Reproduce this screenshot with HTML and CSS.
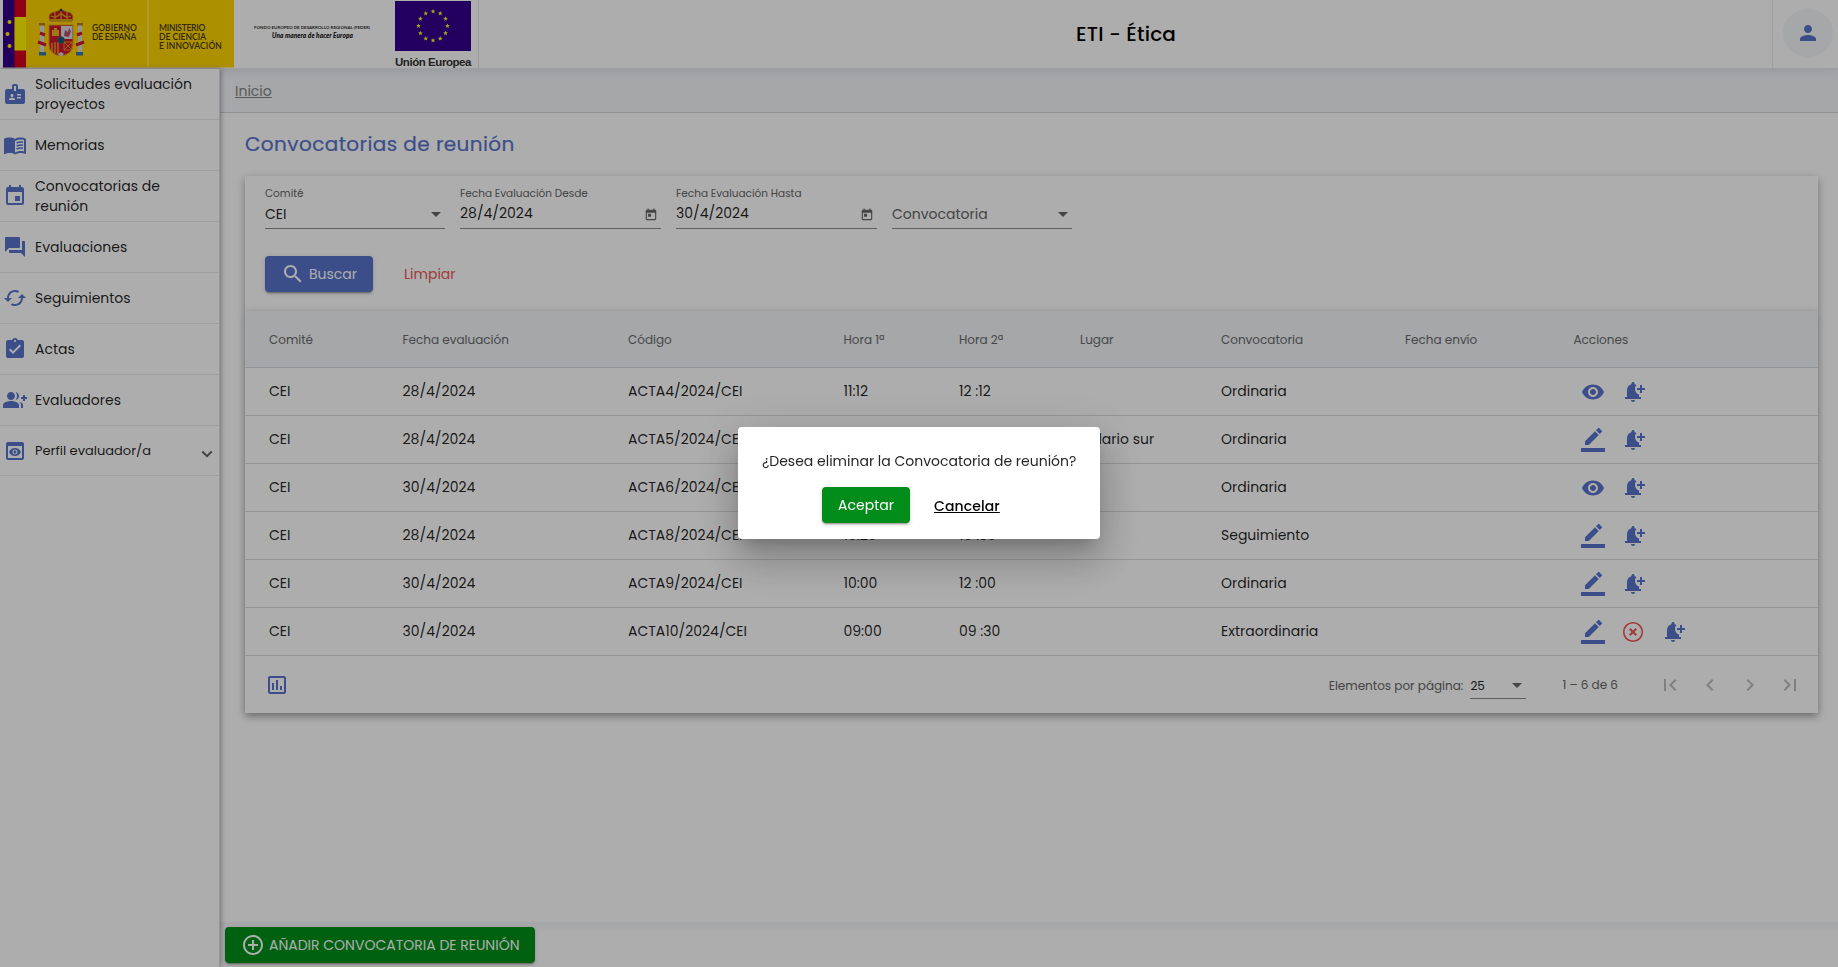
FILE: index.html
```html
<!DOCTYPE html>
<html lang="es">
<head>
<meta charset="utf-8">
<title>ETI - Ética</title>
<link rel="stylesheet" href="styles.css">
</head>
<body>
<svg class="defs" aria-hidden="true">
  <symbol id="i-eye" viewBox="0 0 24 24"><path d="M12 4.500C7 4.500 2.730 7.610 1 12c1.730 4.390 6 7.500 11 7.500s9.270-3.110 11-7.500c-1.730-4.390-6-7.500-11-7.500zM12 17c-2.760 0-5-2.240-5-5s2.240-5 5-5 5 2.240 5 5-2.240 5-5 5zm0-8c-1.660 0-3 1.340-3 3s1.340 3 3 3 3-1.340 3-3-1.340-3-3-3z"/></symbol>
  <symbol id="i-edit" viewBox="0 0 24 24"><path d="M17.750 7L14 3.250l-10 10V17h3.750l10-10zm2.960-2.960c.39-.39.39-1.020 0-1.410L18.370.290c-.39-.39-1.020-.39-1.410 0L15 2.250 18.750 6l1.960-1.960zM0 20h24v4H0z"/></symbol>
  <symbol id="i-bell" viewBox="0 0 24 24"><path d="M10 20h4c0 1.100-.9 2-2 2s-2-.9-2-2zm4-11c0 2.610 1.670 4.830 4 5.660V17h2v2H4v-2h2v-7c0-2.790 1.910-5.140 4.500-5.800v-.7c0-.83.67-1.500 1.500-1.500s1.500.67 1.500 1.500v.7c.71.18 1.360.49 1.950.9C14.540 6.140 14 7.500 14 9zm10-1h-3V5h-2v3h-3v2h3v3h2v-3h3V8z"/></symbol>
  <symbol id="i-cancel" viewBox="0 0 24 24"><circle cx="12" cy="12" r="9.300" fill="none" stroke="currentColor" stroke-width="1.600"/><path d="M8.700 8.700l6.600 6.600M15.300 8.700l-6.600 6.600" fill="none" stroke="currentColor" stroke-width="2"/></symbol>
  <symbol id="i-cal" viewBox="0 0 24 24"><path d="M19 3h-1V1h-2v2H8V1H6v2H5c-1.110 0-1.990.9-1.990 2L3 19c0 1.100.89 2 2 2h14c1.100 0 2-.9 2-2V5c0-1.100-.9-2-2-2zm0 16H5V8h14v11zM7 10h5v5H7z"/></symbol>
</svg>
<div class="page">
  <header class="topbar">
    <svg class="gov" viewBox="0 0 234 68" width="234" height="68">
      <rect x="3" width="12" height="67.500" fill="#35008a"/><rect x="14.500" width="12" height="67.500" fill="#d4001c"/><rect x="14.500" y="17" width="12" height="33.500" fill="#fff500"/>
      <rect x="26" width="121" height="67.500" fill="#ffd500"/><rect x="149" width="85" height="67.500" fill="#ffd500"/><rect x="147" width="2" height="67.500" fill="#ffe34d"/>
      <g fill="#fff200"><circle cx="9.500" cy="22" r="2"/><circle cx="7.500" cy="34" r="2"/><circle cx="9.500" cy="46" r="2"/></g>
      <g>
        <path d="M50 21q-3-8 5-9l6-2 6 2q8 1 5 9z" fill="#cb142c" stroke="#a98514" stroke-width="1"/>
        <path d="M51 16q5 3 10-3q5 6 10 3M61 9v12M55 12v8M67 12v8" fill="none" stroke="#d9a91a" stroke-width="1.200"/><rect x="50" y="19" width="22" height="3" fill="#d4a419"/><circle cx="61" cy="10" r="1.500" fill="#4a3a20"/>
        <path d="M40 25h4v27h-4zM78 25h4v27h-4z" fill="#d9dce2"/><path d="M39 23h6v2.500h-6zM77 23h6v2.500h-6z" fill="#b67a18"/>
        <path d="M39 52h7v3.500h-7zM76 52h7v3.500h-7z" fill="#3977a8"/><path d="M38 42l8 3M84 42l-8 3M40 33l5 2M82 33l-5 2" stroke="#cf1530" stroke-width="3"/>
        <path d="M49 25h24v20q0 9-12 11q-12-2-12-11z" fill="#d31532" stroke="#d9a41c"/>
        <path d="M61 26h11.500v13H61z" fill="#dfdbe4"/><path d="M64 36l1-6 3 2 1-4 2 3-2 6z" fill="#b34e79"/><path d="M52 36v-6h2v-2h3v2h2v6z" fill="#e7b61c"/><path d="M52 43v9M55 42v11M58 42v12" stroke="#f2ba16" stroke-width="1.200"/><path d="M64 42h8v8h-8zM64 42l8 8M72 42l-8 8" fill="none" stroke="#edb216" stroke-width=".8"/>
        <circle cx="61" cy="40" r="3.300" fill="#174f8f" stroke="#3f6b47"/><path d="M58 54l3-2 3 2-3 3z" fill="#d8d7cc"/>
      </g>
    </svg>
    <div class="gov-text gov-a"><span class="fit" data-w="45">GOBIERNO</span><span class="fit" data-w="44">DE ESPAÑA</span></div>
    <div class="gov-text gov-b"><span class="fit" data-w="46">MINISTERIO</span><span class="fit" data-w="47">DE CIENCIA</span><span class="fit" data-w="63">E INNOVACIÓN</span></div>
    <div class="feder"><span class="fit small" data-w="116">FONDO EUROPEO DE DESARROLLO REGIONAL (FEDER)</span><span class="fit tag" data-w="81">Una manera de hacer Europa</span></div>
    <div class="eu"><svg width="76" height="51" viewBox="0 0 76 51"><rect y="1" width="76" height="50.500" fill="#34008c"/><g id="stars" fill="#f5ef2a"></g></svg><span class="fit" data-w="76">Unión Europea</span></div>
    <div class="apptitle">ETI - Ética</div>
    <div class="user"><span class="avatar"><svg viewBox="0 0 24 24" width="24" height="24"><path d="M12 12c2.210 0 4-1.790 4-4s-1.790-4-4-4-4 1.790-4 4 1.790 4 4 4zm0 2c-2.670 0-8 1.340-8 4v2h16v-2c0-2.660-5.330-4-8-4z"/></svg></span></div>
  </header>
  <div class="body">
    <nav class="side">
      <a class="nav"><svg viewBox="0 0 24 24"><path d="M20 7h-5V4c0-1.100-.9-2-2-2h-2c-1.100 0-2 .9-2 2v3H4c-1.100 0-2 .9-2 2v11c0 1.100.9 2 2 2h16c1.100 0 2-.9 2-2V9c0-1.100-.9-2-2-2zM9 12c.83 0 1.500.67 1.500 1.500S9.830 15 9 15s-1.500-.67-1.500-1.500S8.170 12 9 12zm3 6H6v-.75c0-1 2-1.500 3-1.500s3 .5 3 1.500V18zm1-9h-2V4h2v5zm5 7.500h-4V15h4v1.500zm0-3h-4V12h4v1.500z"/></svg><span>Solicitudes evaluación<br>proyectos</span></a>
      <a class="nav"><svg viewBox="0 0 24 24"><path d="M21 5c-1.110-.35-2.330-.5-3.500-.5-1.950 0-4.050.4-5.500 1.500-1.450-1.100-3.550-1.500-5.500-1.500S2.450 4.900 1 6v14.650c0 .25.25.5.5.5.1 0 .15-.05.25-.05C3.100 20.450 5.050 20 6.500 20c1.950 0 4.050.4 5.500 1.500 1.350-.85 3.800-1.500 5.500-1.500 1.650 0 3.350.3 4.750 1.050.1.050.15.050.25.050.25 0 .5-.25.5-.5V6c-.6-.45-1.250-.75-2-1zm0 13.500c-1.100-.35-2.300-.5-3.500-.5-1.700 0-4.150.65-5.500 1.500V8c1.350-.85 3.800-1.500 5.500-1.500 1.200 0 2.400.15 3.500.5v11.500z"/><path d="M13.600 10q3-1.500 6.400-.8M13.600 13q3-1.500 6.400-.8M13.600 16q3-1.500 6.400-.8" fill="none" stroke="currentColor" stroke-width="1.500"/></svg><span>Memorias</span></a>
      <a class="nav"><svg viewBox="0 0 24 24"><path d="M17 12h-5v5h5v-5zM16 1v2H8V1H6v2H5c-1.110 0-1.990.9-1.990 2L3 19c0 1.100.89 2 2 2h14c1.100 0 2-.9 2-2V5c0-1.100-.9-2-2-2h-1V1h-2zm3 18H5V8h14v11z"/></svg><span>Convocatorias de<br>reunión</span></a>
      <a class="nav"><svg viewBox="0 0 24 24"><path d="M21 6h-2v9H6v2c0 .55.45 1 1 1h11l4 4V7c0-.55-.45-1-1-1zm-4 6V3c0-.55-.45-1-1-1H3c-.55 0-1 .45-1 1v14l4-4h10c.55 0 1-.45 1-1z"/></svg><span>Evaluaciones</span></a>
      <a class="nav"><svg viewBox="0 0 24 24"><path d="M19 8l-4 4h3c0 3.310-2.690 6-6 6-1.010 0-1.970-.25-2.800-.7l-1.460 1.460C8.970 19.540 10.430 20 12 20c4.420 0 8-3.580 8-8h3l-4-4zM6 12c0-3.310 2.690-6 6-6 1.010 0 1.970.25 2.800.7l1.460-1.460C15.030 4.460 13.570 4 12 4c-4.420 0-8 3.580-8 8H1l4 4 4-4H6z"/></svg><span>Seguimientos</span></a>
      <a class="nav"><svg viewBox="0 0 24 24"><path d="M19 3h-4.180C14.400 1.840 13.300 1 12 1c-1.300 0-2.400.84-2.820 2H5c-1.100 0-2 .9-2 2v14c0 1.100.9 2 2 2h14c1.100 0 2-.9 2-2V5c0-1.100-.9-2-2-2zm-7 0c.55 0 1 .45 1 1s-.45 1-1 1-1-.45-1-1 .45-1 1-1zm-2 14l-4-4 1.410-1.410L10 14.170l6.590-6.590L18 9l-8 8z"/></svg><span>Actas</span></a>
      <a class="nav"><svg viewBox="0 0 24 24"><path d="M22 9V7h-2v2h-2v2h2v2h2v-2h2V9zM8 12c2.210 0 4-1.790 4-4s-1.790-4-4-4-4 1.790-4 4 1.790 4 4 4zm0 1c-2.670 0-8 1.340-8 4v3h16v-3c0-2.660-5.330-4-8-4zm4.510-8.950C13.430 5.110 14 6.490 14 8s-.57 2.890-1.490 3.950C14.470 11.700 16 10.040 16 8s-1.530-3.700-3.490-3.950zm4.020 9.780C17.420 14.660 18 15.700 18 17v3h2v-3c0-1.450-1.590-2.510-3.470-3.170z"/></svg><span>Evaluadores</span></a>
      <a class="nav last"><svg viewBox="0 0 24 24"><path d="M19 3H5c-1.110 0-2 .9-2 2v14c0 1.100.89 2 2 2h14c1.100 0 2-.9 2-2V5c0-1.100-.89-2-2-2zm0 16H5V7h14v12zm-5.500-6c0 .83-.67 1.500-1.500 1.500s-1.500-.67-1.500-1.500.67-1.500 1.500-1.500 1.500.67 1.500 1.500zM12 9c-2.730 0-5.060 1.660-6 4 .94 2.340 3.270 4 6 4s5.060-1.660 6-4c-.94-2.340-3.270-4-6-4zm0 6.500c-1.380 0-2.500-1.120-2.500-2.500s1.120-2.500 2.500-2.500 2.500 1.120 2.500 2.500-1.120 2.500-2.500 2.500z"/></svg><span class="grow">Perfil evaluador/a</span><svg class="chev" viewBox="0 0 12 12"><path d="M1.300 3.500L6 8.200l4.700-4.700" fill="none" stroke="currentColor" stroke-width="2"/></svg></a>
    </nav>
    <main class="main">
      <div class="crumb"><a>Inicio</a></div>
      <div class="content">
        <h1>Convocatorias de reunión</h1>
        <section class="filters">
          <div class="fields">
            <div class="field"><label>Comité</label><div class="val sel"><span>CEI</span><i class="caret"></i></div></div>
            <div class="field date"><label>Fecha Evaluación Desde</label><div class="val"><span>28/4/2024</span><svg><use href="#i-cal"/></svg></div></div>
            <div class="field date"><label>Fecha Evaluación Hasta</label><div class="val"><span>30/4/2024</span><svg><use href="#i-cal"/></svg></div></div>
            <div class="field"><label></label><div class="val sel ph"><span>Convocatoria</span><i class="caret"></i></div></div>
          </div>
          <div class="buttons">
            <button class="btn search"><svg viewBox="0 0 24 24"><path d="M15.500 14h-.79l-.28-.27C15.410 12.590 16 11.110 16 9.500 16 5.910 13.090 3 9.500 3S3 5.910 3 9.500 5.910 16 9.500 16c1.610 0 3.090-.59 4.230-1.570l.27.28v.79l5 4.990L20.490 19l-4.990-5zm-6 0C7.010 14 5 11.990 5 9.500S7.010 5 9.500 5 14 7.010 14 9.500 11.990 14 9.500 14z"/></svg><span>Buscar</span></button>
            <a class="clear">Limpiar</a>
          </div>
        </section>
        <section class="results">
          <div class="row head"><span>Comité</span><span>Fecha evaluación</span><span>Código</span><span>Hora 1ª</span><span>Hora 2ª</span><span>Lugar</span><span>Convocatoria</span><span>Fecha envío</span><span>Acciones</span></div>
          <div id="rows"></div>
          <div class="foot">
            <svg class="chart" viewBox="0 0 24 24"><path d="M9 17H7v-7h2v7zm4 0h-2V7h2v10zm4 0h-2v-4h2v4zm2 2H5V5h14v14zm0-16H5c-1.100 0-2 .9-2 2v14c0 1.100.9 2 2 2h14c1.100 0 2-.9 2-2V5c0-1.100-.9-2-2-2z"/></svg>
            <span class="per">Elementos por página:</span>
            <span class="size"><span>25</span><i class="caret"></i></span>
            <span class="range">1 – 6 de 6</span>
            <span class="pager">
              <svg viewBox="0 0 24 24"><path d="M18.410 16.590L13.820 12l4.590-4.590L17 6l-6 6 6 6zM6 6h2v12H6z"/></svg>
              <svg viewBox="0 0 24 24"><path d="M15.410 7.410L14 6l-6 6 6 6 1.410-1.410L10.830 12z"/></svg>
              <svg viewBox="0 0 24 24"><path d="M10 6L8.590 7.410 13.170 12l-4.580 4.590L10 18l6-6z"/></svg>
              <svg viewBox="0 0 24 24"><path d="M5.590 7.410L10.180 12l-4.590 4.590L7 18l6-6-6-6zM16 6h2v12h-2z"/></svg>
            </span>
          </div>
        </section>
      </div>
      <footer class="bottom"><button class="btn add"><svg viewBox="0 0 24 24"><path d="M13 7h-2v4H7v2h4v4h2v-4h4v-2h-4V7zm-1-5C6.480 2 2 6.480 2 12s4.480 10 10 10 10-4.480 10-10S17.520 2 12 2zm0 18c-4.410 0-8-3.590-8-8s3.590-8 8-8 8 3.590 8 8-3.590 8-8 8z"/></svg><span>AÑADIR CONVOCATORIA DE REUNIÓN</span></button></footer>
    </main>
  </div>
</div>
<div class="backdrop">
  <div class="dialog">
    <p>¿Desea eliminar la Convocatoria de reunión?</p>
    <div class="actions"><button class="btn ok">Aceptar</button><a class="cancel">Cancelar</a></div>
  </div>
</div>
<script src="app.js"></script>
</body>
</html>
```
FILE: styles.css
```css
* { box-sizing: border-box; }
body { margin: 0; font-family: Poppins, Inter, "Open Sans", sans-serif; font-size: 14px; color: rgba(0,0,0,.87); background: #fff; overflow: hidden; white-space: nowrap; }
.defs { position: absolute; width: 0; height: 0; }
svg { fill: currentColor; flex: none; display: block; }
.page { height: 967px; display: flex; flex-direction: column; }
.topbar { height: 69px; flex: none; display: flex; border-bottom: 1px solid #e7e8f0; box-shadow: 0 2px 10px rgba(40,40,90,.1); z-index: 1; background: #fff; }
.gov { margin-right: -142px; }
.gov-text { display: flex; flex-direction: column; align-items: flex-start; font: 600 8.500px/9px Lato, sans-serif; color: #4a3a10; padding-top: 24px; width: 67px; }
.gov-b { width: 81px; }
.feder { width: 155px; display: flex; flex-direction: column; align-items: flex-start; padding: 24px 0 0 14px; line-height: 7px; font-family: Lato, sans-serif; color: #333; }
.small { font-size: 4.500px; font-weight: 700; line-height: 8px; }
.tag { font-size: 6.500px; font-weight: 900; font-style: italic; margin-left: 18px; color: #111; }
.eu { width: 84px; font: 700 11.500px/22px "Liberation Sans", sans-serif; color: #333; border-right: 1px solid #e4e4ea; }
.eu .fit { display: block; width: max-content; }
.apptitle { flex: 1; font-size: 20px; font-weight: 500; letter-spacing: .2px; color: #000; line-height: 68px; padding-left: 597px; }
.user { width: 66px; border-left: 1px solid #e6e8ee; padding: 9px 0 0 10px; }
.avatar { width: 50px; height: 48px; border-radius: 50%; background: #f3f6f9; display: flex; align-items: center; justify-content: center; color: #5774ca; }
.body { flex: 1; display: flex; min-height: 0; }
.side { width: 220px; flex: none; border-right: 1px solid #dedede; box-shadow: 1px 0 5px rgba(0,0,0,.35); z-index: 1; background: #fff; }
.nav { display: flex; align-items: center; height: 51px; border-bottom: 1px solid #e9e9e9; padding-left: 3px; line-height: 20px; }
.nav > svg { width: 24px; height: 24px; margin-right: 8px; color: #5774ca; }
.nav.last { height: 50px; font-size: 13px; }
.grow { flex: 1; }
.nav.last .chev { width: 12px; height: 12px; color: #666; margin: 6px 6px 0 0; }
.main { flex: 1; display: flex; flex-direction: column; min-width: 0; }
.crumb { height: 44px; flex: none; background: #f3f6fa; border-bottom: 1px solid #d5d6da; padding-left: 15px; line-height: 44px; color: #858585; }
.crumb a { text-decoration: underline; }
.content { flex: 1; padding: 13px 20px 0 25px; }
h1 { margin: 0; width: max-content; font-size: 20px; font-weight: 400; line-height: 36px; letter-spacing: .42px; color: #5774ca; -webkit-text-stroke: .2px #5774ca; }
.filters { margin-top: 14px; height: 135px; padding: 11px 20px 0; background: #fff; box-shadow: 0 3px 8px rgba(0,0,0,.35); }
.fields { display: flex; gap: 15px; }
.field { width: 180px; height: 42px; border-bottom: 1px solid #8b8b8b; }
.field.date { width: 201px; }
.field label { display: block; width: max-content; height: 14px; font-size: 10.500px; line-height: 14px; color: #666; }
.val { display: flex; justify-content: space-between; align-items: center; line-height: 22px; height: 22px; margin-top: 1px; }
.val.sel { padding-right: 4px; margin-top: 2px; }
.val.ph { color: #666; }
.val svg { width: 14px; height: 14px; margin: 3px 3px 0 0; color: #666; }
.caret { border: 5px solid transparent; border-top-color: #666; border-bottom: 0; }
.buttons { display: flex; align-items: center; margin-top: 27px; }
.btn { font: inherit; height: 36px; border: 0; border-radius: 4px; padding: 0; color: #fff; display: flex; align-items: center; box-shadow: 0 3px 1px -2px rgba(0,0,0,.2), 0 2px 2px rgba(0,0,0,.14), 0 1px 5px rgba(0,0,0,.12); }
.btn svg { width: 24px; height: 24px; }
.search { width: 108px; background: #5774ca; padding-left: 16px; gap: 4px; }
.clear { margin-left: 31px; color: #eb5757; }
.results { background: #fff; box-shadow: 0 3px 8px rgba(0,0,0,.4); }
.row { display: grid; grid-template-columns: 133.500px 225.500px 215.500px 115.500px 121px 141px 184px 168.500px 1fr; height: 48px; align-items: center; padding-left: 24px; border-bottom: 1px solid #dcdcdc; }
.row.head { height: 57px; padding-top: 2px; background: #f3f6f9; font-size: 12px; color: #6a6b6d; border-color: #d6dade; }
.acts { display: flex; gap: 16px; padding-left: 7.500px; color: #5774ca; }
.acts svg { width: 24px; height: 24px; }
.acts .red { color: #ee5555; }
.foot { height: 57px; display: flex; align-items: center; font-size: 12px; color: #666; padding-left: 20px; padding-right: 16px; }
.foot .chart { width: 24px; height: 24px; color: #5774ca; }
.per { margin-left: auto; padding-top: 2px; }
.size { width: 56px; height: 29px; margin-left: 7px; border-bottom: 1px solid #8b8b8b; display: flex; align-items: center; justify-content: space-between; padding: 3px 4px 0 0; color: #222; }
.range { margin-left: 36px; }
.pager { margin-left: 40px; display: flex; gap: 16px; color: #bdbdbd; }
.pager svg { width: 24px; height: 24px; }
.bottom { height: 45px; background: linear-gradient(#f3f5f8, #fff 10px); padding: 5px 0 0 5px; }
.add { width: 310px; background: #009019; padding-left: 16px; gap: 4px; }
.backdrop { position: fixed; inset: 0; padding-bottom: 1px; background: rgba(0,0,0,.32); display: flex; align-items: center; justify-content: center; z-index: 5; }
.dialog { width: 362px; height: 112px; background: #fff; border-radius: 4px; padding: 24px; box-shadow: 0 11px 15px -7px rgba(0,0,0,.2), 0 24px 38px 3px rgba(0,0,0,.14), 0 9px 46px 8px rgba(0,0,0,.12); }
.dialog p { margin: 0 0 16px; line-height: 20px; width: max-content; color: #262626; }
.actions { display: flex; align-items: center; padding-left: 60px; }
.ok { width: 88px; background: #028c1a; justify-content: center; }
.cancel { margin: 2px 0 0 24px; font-weight: 500; letter-spacing: .1px; color: #000; text-decoration: underline; }
```
FILE: app.js
```js
// Table rows: date, code, first hour, second hour, place, kind, sent date, actions
const rows = [
  ["28/4/2024", "ACTA4/2024/CEI", "11:12", "12 :12", "", "Ordinaria", "", "eye bell"],
  ["28/4/2024", "ACTA5/2024/CEI", "10:00", "11 :00", "Aulario sur", "Ordinaria", "", "edit bell"],
  ["30/4/2024", "ACTA6/2024/CEI", "10:00", "11 :00", "", "Ordinaria", "", "eye bell"],
  ["28/4/2024", "ACTA8/2024/CEI", "10:20", "10 :30", "", "Seguimiento", "", "edit bell"],
  ["30/4/2024", "ACTA9/2024/CEI", "10:00", "12 :00", "", "Ordinaria", "", "edit bell"],
  ["30/4/2024", "ACTA10/2024/CEI", "09:00", "09 :30", "", "Extraordinaria", "", "edit cancel bell"]
];
document.getElementById("rows").innerHTML = rows.map(r => {
  const cells = ["CEI", ...r.slice(0, 7)].map(t => `<span>${t}</span>`).join("");
  const acts = r[7].split(" ").map(n => `<svg class="${n === "cancel" ? "red" : n}"><use href="#i-${n}"/></svg>`).join("");
  return `<div class="row">${cells}<span class="acts">${acts}</span></div>`;
}).join("");

// Ring of twelve stars
let ring = "";
for (let i = 0; i < 12; i++) {
  const a = i * Math.PI / 6, cx = 38 + 14.5 * Math.sin(a), cy = 26 - 14.5 * Math.cos(a);
  const pts = [];
  for (let k = 0; k < 10; k++) {
    const r = k % 2 ? 1.1 : 2.5, b = k * Math.PI / 5;
    pts.push((cx + r * Math.sin(b)).toFixed(2) + "," + (cy - r * Math.cos(b)).toFixed(2));
  }
  ring += `<polygon points="${pts.join(" ")}"/>`;
}
document.getElementById("stars").innerHTML = ring;

// Track the logo captions out to their nominal width
document.querySelectorAll(".fit").forEach(e => {
  const n = e.textContent.length, w = e.getBoundingClientRect().width;
  e.style.letterSpacing = ((+e.dataset.w - w) / n).toFixed(3) + "px";
});
```
